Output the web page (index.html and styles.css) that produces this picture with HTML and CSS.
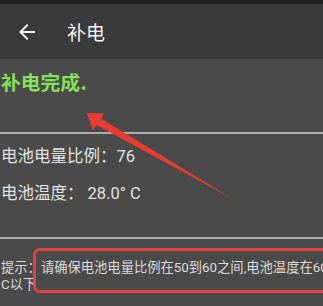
FILE: index.html
```html
<!DOCTYPE html>
<html lang="zh-CN">
<head>
<meta charset="utf-8">
<title>补电</title>
<link rel="stylesheet" href="styles.css">
</head>
<body>
<div class="screen">
  <div class="statusbar"></div>
  <header class="toolbar">
    <svg class="back" width="24" height="24" viewBox="0 0 24 24"><path d="M20 11H7.83l5.59-5.59L12 4l-8 8 8 8 1.41-1.41L7.83 13H20v-2z" fill="#f2f2f2"/></svg>
    <span class="title">补电</span>
  </header>
  <main class="main">
    <section class="result">补电完成.</section>
    <div class="divider"></div>
    <section class="info">
      <div class="row">电池电量比例：76</div>
      <div class="row">电池温度：&nbsp;28.0° C</div>
    </section>
    <div class="divider"></div>
    <section class="hint">提示：请确保电池电量比例在50到60之间,电池温度在60° C以下</section>
  </main>
  <div class="callout"></div>
  <svg class="pointer" width="323" height="306" viewBox="0 0 323 306">
    <polygon points="87,113 104,113.5 101,118.5 232,198.5 96.5,125 93,130.5" fill="#ea3b32"/>
  </svg>
</div>
</body>
</html>
```
FILE: styles.css
```css
html, body {
  margin: 0;
  padding: 0;
  width: 323px;
  height: 306px;
  overflow: hidden;
  background: #4a4a4a;
}
.screen {
  position: relative;
  width: 323px;
  height: 306px;
  overflow: hidden;
  font-family: "Roboto", "Noto Sans CJK SC", sans-serif;
}
.statusbar {
  height: 4px;
  background: #1f1f1f;
}
.toolbar {
  height: 55px;
  background: #3a3a3a;
  display: flex;
  align-items: center;
  padding-left: 15px;
}
.back {
  display: block;
  margin-top: 1px;
}
.title {
  margin-left: 28px;
  color: #f2f2f2;
  font-size: 19px;
  font-family: "Noto Sans CJK SC", sans-serif;
  line-height: 24px;
}
.main {
  background: #4a4a4a;
  padding-left: 1px;
}
.result {
  height: 73px;
  box-sizing: border-box;
  padding-top: 11px;
  color: #82e05a;
  font-weight: bold;
  font-size: 19.8px;
  line-height: 24px;
  font-family: "Noto Sans CJK SC", sans-serif;
}
.divider {
  height: 2px;
  background: #adadad;
  margin-left: -1px;
}
.info {
  height: 103px;
  box-sizing: border-box;
  padding-top: 11px;
  display: flex;
  flex-direction: column;
  gap: 13px;
}
.row {
  color: #e2e2e2;
  font-size: 16.5px;
  line-height: 24px;
}
.hint {
  width: 332px;
  padding-top: 20px;
  color: #dcdcdc;
  font-size: 13.3px;
  line-height: 17px;
}
.callout {
  position: absolute;
  left: 33px;
  top: 248px;
  width: 330px;
  height: 45px;
  box-sizing: border-box;
  border: 3.5px solid #e2433c;
  border-radius: 7px;
}
.pointer {
  position: absolute;
  left: 0;
  top: 0;
}
```
